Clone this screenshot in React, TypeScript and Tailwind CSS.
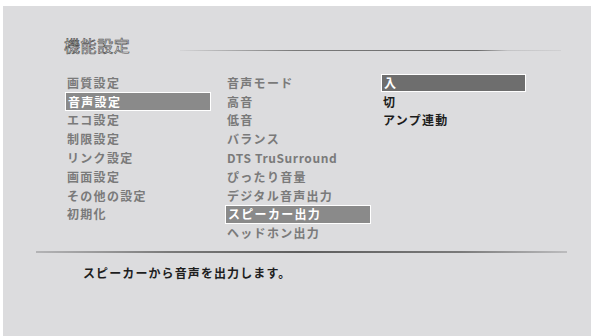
const jp = "font-['Noto_Sans_CJK_JP','Noto_Sans',sans-serif]";

type Item = { label: string; selected?: boolean };

const mainMenu: Item[] = [
  { label: "画質設定" },
  { label: "音声設定", selected: true },
  { label: "エコ設定" },
  { label: "制限設定" },
  { label: "リンク設定" },
  { label: "画面設定" },
  { label: "その他の設定" },
  { label: "初期化" },
];

const soundMenu: Item[] = [
  { label: "音声モード" },
  { label: "高音" },
  { label: "低音" },
  { label: "バランス" },
  { label: "DTS TruSurround" },
  { label: "ぴったり音量" },
  { label: "デジタル音声出力" },
  { label: "スピーカー出力", selected: true },
  { label: "ヘッドホン出力" },
];

const options: Item[] = [
  { label: "入", selected: true },
  { label: "切" },
  { label: "アンプ連動" },
];

// one menu column; selected rows get the framed bar
const MenuColumn = ({
  items,
  width,
  active,
}: {
  items: Item[];
  width: string;
  active?: boolean;
}) => (
  <ul className={`flex flex-col ${width}`}>
    {items.map((item) => (
      <li
        key={item.label}
        className={`h-[18.8px] flex items-center pl-[2px] text-[12px] font-bold whitespace-nowrap ${
          /^[A-Z]/.test(item.label) ? "tracking-[0.6px]" : "tracking-[1.3px]"
        } ${
          item.selected
            ? `border border-white text-white ${active ? "bg-[#6e6e6e]" : "bg-[#8a8a8a]"}`
            : active
              ? "text-[#1c1c1c]"
              : "text-[#7a7a7a]"
        }`}
      >
        {item.label}
      </li>
    ))}
  </ul>
);

export default function App() {
  return (
    <div className={`w-[591px] h-[336px] bg-white pt-[6px] pl-[3px] ${jp}`}>
      <div className="w-full h-full bg-[#dcdcde] flex flex-col">
        {/* header */}
        <div className="flex items-end pt-[29px] pl-[61px] pr-[30px]">
          <h1 className="text-[16px] leading-[20px] font-normal tracking-[0.6px] text-[#e6e6e6] [-webkit-text-stroke:0.6px_#505050]">
            機能設定
          </h1>
          <div className="flex-1 ml-[50px] mb-[4px] h-px bg-[linear-gradient(to_right,#d4d4d6_0%,#7a7a7a_30%,#6a6a6a_78%,#c4c4c6_86%,#d0d0d2_100%)]" />
        </div>

        {/* menus */}
        <div className="flex items-start mt-[18.5px] pl-[62px]">
          <MenuColumn items={mainMenu} width="w-[146px]" />
          <div className="ml-[14px]">
            <MenuColumn items={soundMenu} width="w-[146px]" />
          </div>
          <div className="ml-[10px]">
            <MenuColumn items={options} width="w-[145px]" active />
          </div>
        </div>

        {/* divider */}
        <div className="mt-[8px] ml-[33px] mr-[24px] h-[2px] bg-[linear-gradient(to_right,#b4b4b6_0%,#7a7a7a_25%,#5e5e5e_50%,#7a7a7a_80%,#bcbcbe_100%)]" />

        {/* description */}
        <p className="mt-[12px] pl-[80px] text-[12px] leading-[16px] font-bold tracking-[1.1px] text-[#1e1e1e]">
          スピーカーから音声を出力します。
        </p>
      </div>
    </div>
  );
}
